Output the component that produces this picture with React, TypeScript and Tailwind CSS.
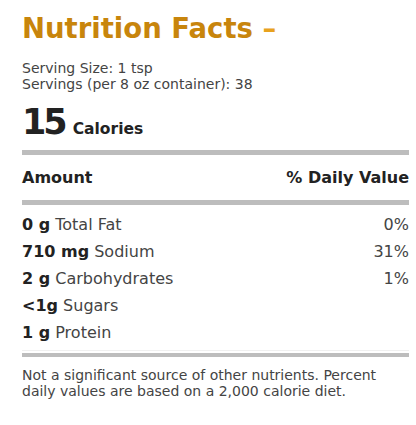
const rows = [
  { amt: "0 g", name: "Total Fat", dv: "0%" },
  { amt: "710 mg", name: "Sodium", dv: "31%" },
  { amt: "2 g", name: "Carbohydrates", dv: "1%" },
  { amt: "<1g", name: "Sugars", dv: "" },
  { amt: "1 g", name: "Protein", dv: "" },
];

export default function App() {
  return (
    <div
      className="min-h-screen bg-white pl-[22px] pr-[7px] pt-[11px] text-[#444]"
      style={{ fontFamily: '"DejaVu Sans", sans-serif' }}
    >
      {/* Title */}
      <h1 className="text-[27.5px] font-bold leading-[34px] text-[#c8850c]">
        Nutrition Facts <span className="text-[#e8a21e]">–</span>
      </h1>

      {/* Serving info */}
      <div className="mt-[15px] text-[14px] leading-[16px]">
        <p>Serving Size: 1 tsp</p>
        <p>Servings (per 8 oz container): 38</p>
      </div>

      {/* Calories */}
      <div className="mt-[10px] flex items-baseline gap-[8px] text-[#222]">
        <span className="text-[35px] font-bold leading-[40px] tracking-[-3px]">15</span>
        <span className="text-[15.5px] font-bold">Calories</span>
      </div>

      <div className="mt-[8px] h-[5px] bg-[#bdbdbd]" />

      <div className="flex items-center justify-between py-[12px] text-[16px] font-bold leading-[21px] text-[#222]">
        <span>Amount</span>
        <span>% Daily Value</span>
      </div>

      <div className="h-[5px] bg-[#bdbdbd]" />

      {/* Nutrient rows */}
      <div className="mt-[6px] border-b border-[#f0f0f0] pb-[4px]">
        {rows.map((r) => (
          <div key={r.name} className="flex h-[27px] items-center justify-between text-[16px]">
            <span>
              <b className="text-[#222]">{r.amt}</b> {r.name}
            </span>
            <span>{r.dv}</span>
          </div>
        ))}
      </div>

      <div className="mt-[2px] h-[4px] bg-[#bdbdbd]" />

      <p className="mt-[10px] text-[14px] leading-[16px]">
        Not a significant source of other nutrients. Percent daily values are based on a 2,000 calorie diet.
      </p>
    </div>
  );
}
